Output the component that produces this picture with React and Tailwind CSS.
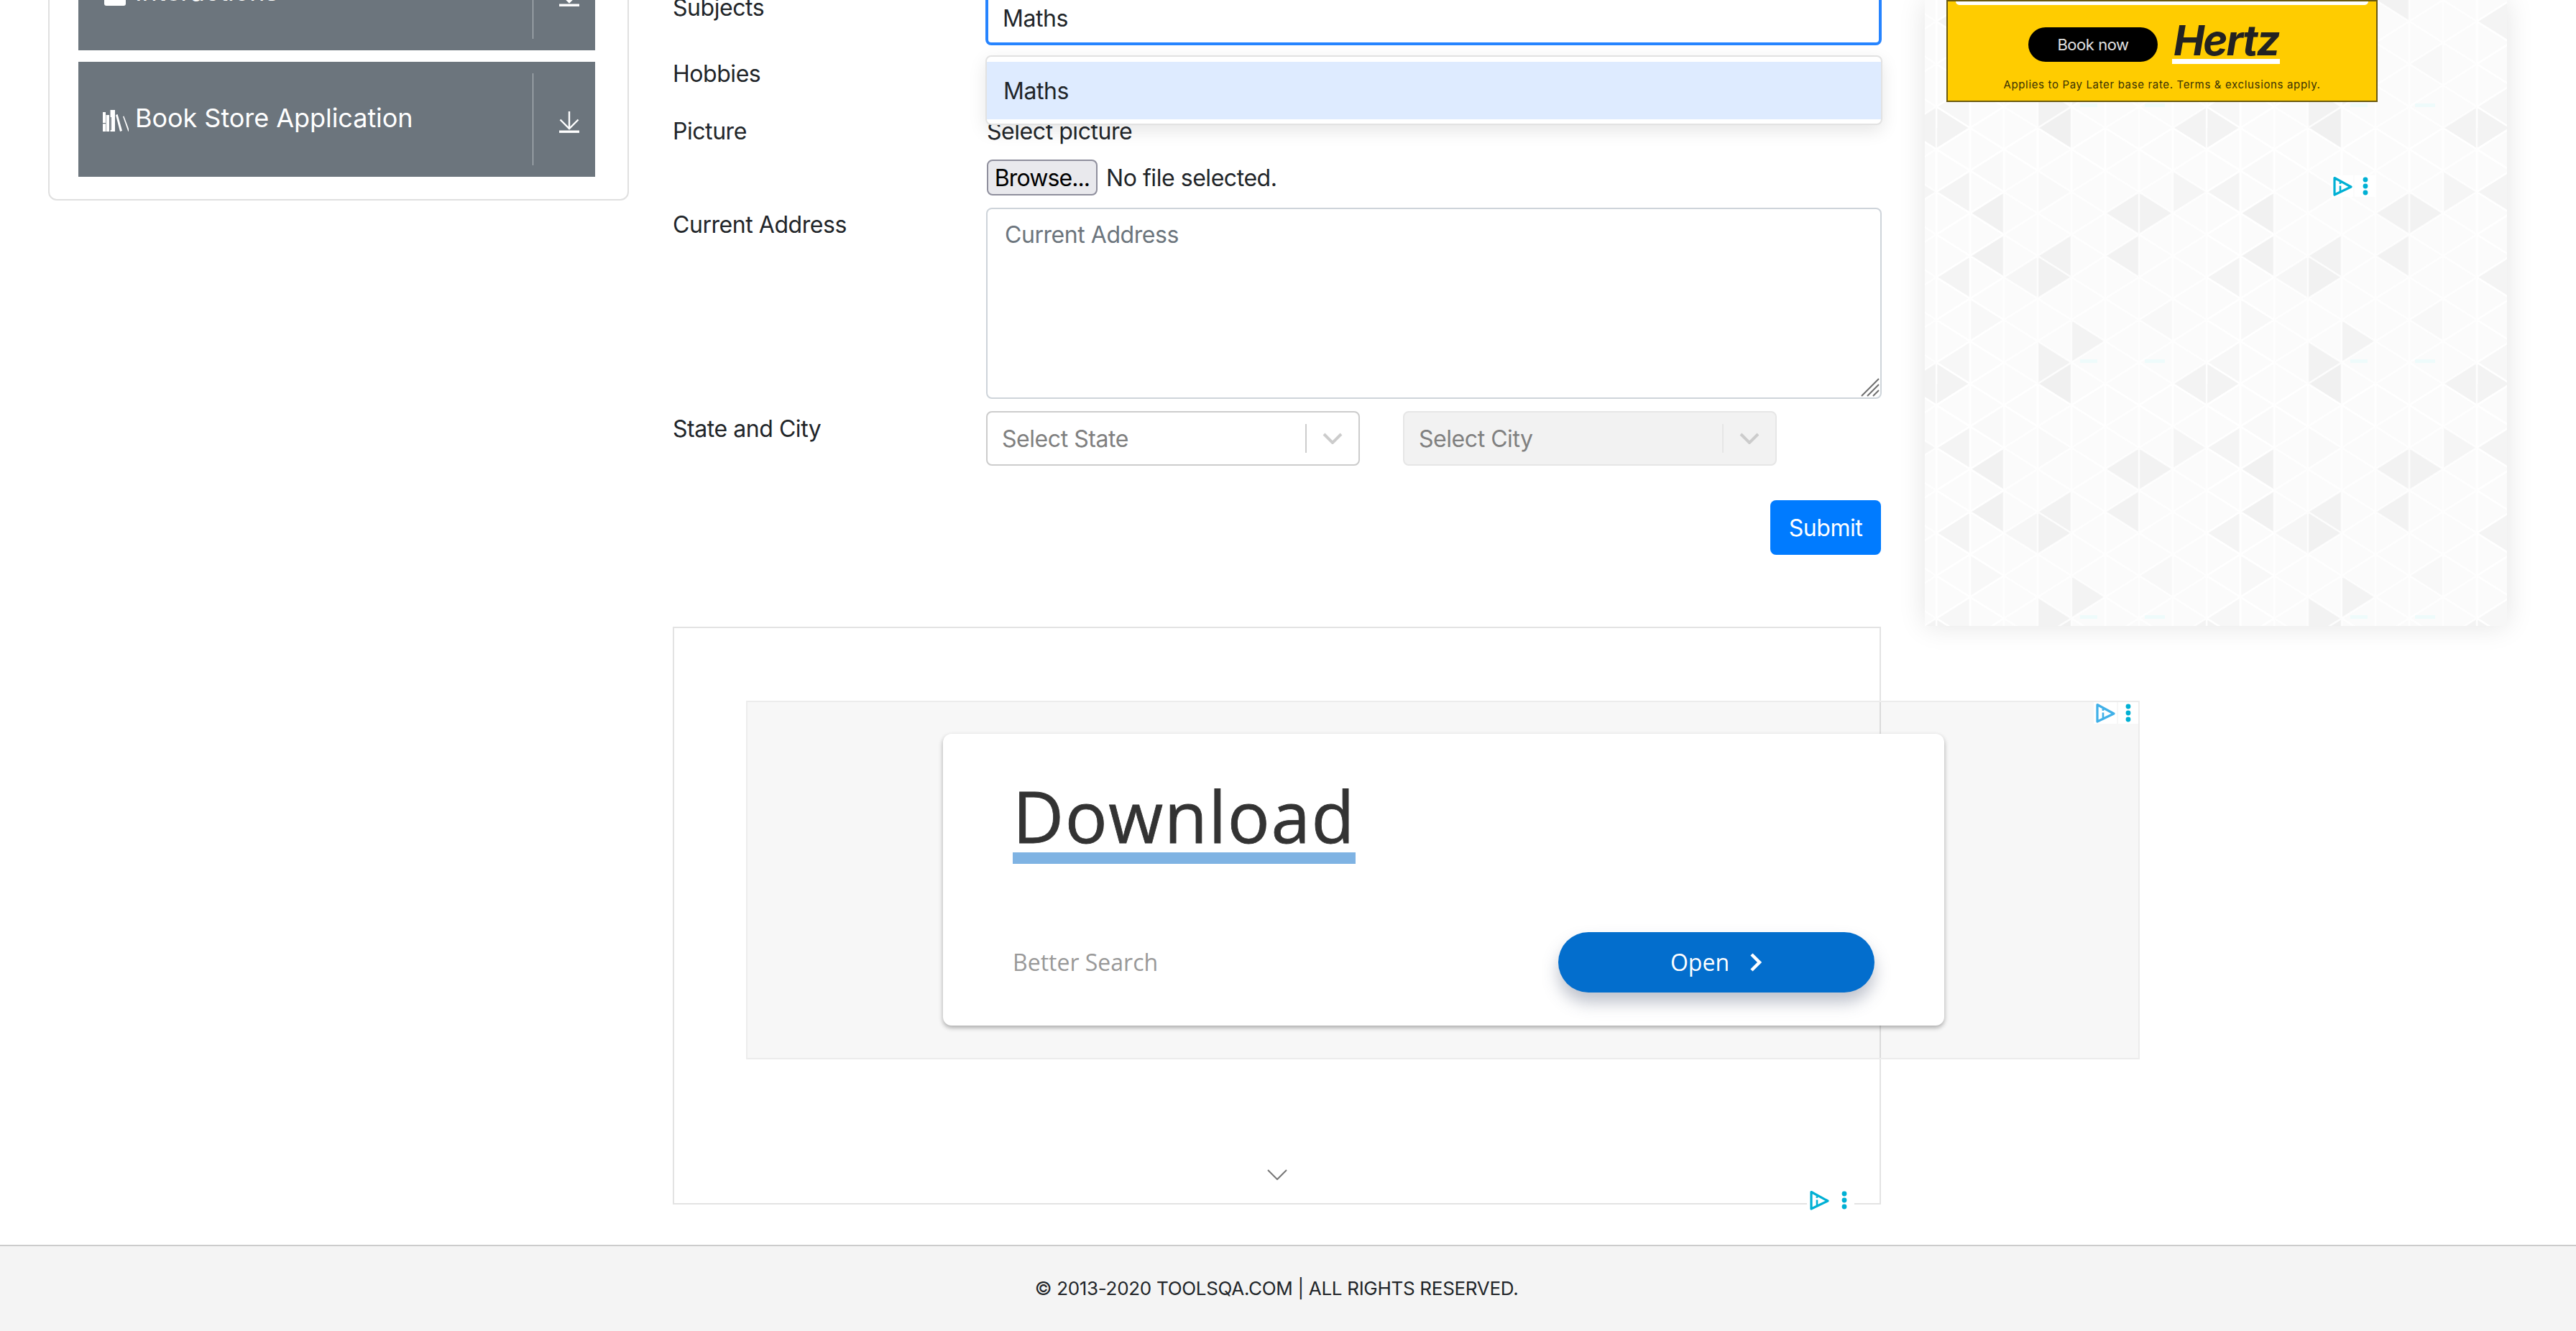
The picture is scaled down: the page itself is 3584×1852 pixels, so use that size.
const cols = Array.from({ length: 10 }, (_, i) => i);
const rows = Array.from({ length: 14 }, (_, j) => j);
const STEP_X = 47;
const STEP_Y = 29.67;
const PX = (i) => i * STEP_X;
const PY = (j) => j * STEP_Y;
// apex column, row, direction, shade
const DARK = [
  [3, 0, 'L', '#f0f0f0'], [7, 0, 'L', '#f3f3f3'], [1, 0, 'R', '#f3f3f3'],
  [0, 3, 'L', '#f4f4f4'], [0, 3, 'R', '#f5f5f5'],
  [1, 4, 'L', '#f1f1f1'], [5, 4, 'L', '#f2f2f2'], [7, 4, 'R', '#f2f2f2'],
  [1, 6, 'L', '#f1f1f1'], [3, 6, 'L', '#f2f2f2'], [5, 6, 'L', '#f2f2f2'],
  [0, 7, 'L', '#f4f4f4'], [2, 7, 'L', '#f6f6f6'], [4, 7, 'R', '#f1f1f1'],
  [5, 10, 'R', '#f3f3f3'],
  [4, 11, 'R', '#f2f2f2'], [0, 11, 'L', '#f7f7f7'],
  [1, 2, 'L', '#f9f9f9'], [4, 3, 'R', '#f9f9f9'], [6, 9, 'L', '#f8f8f8'], [2, 9, 'R', '#f8f8f8'],
];

function tri(i, j, d) {
  const ax = PX(i);
  const ay = PY(j);
  const vx = d === 'L' ? PX(i + 1) : PX(i - 1);
  return `${ax},${ay} ${vx},${ay - STEP_Y} ${vx},${ay + STEP_Y}`;
}

function Pattern() {
  const lines = [];
  cols.forEach((i) => {
    rows.forEach((j) => {
      if ((i + j) % 2 === 1) {
        lines.push(`M${PX(i)} ${PY(j)}L${PX(i + 1)} ${PY(j + 1)}M${PX(i)} ${PY(j)}L${PX(i + 1)} ${PY(j - 1)}M${PX(i)} ${PY(j)}L${PX(i)} ${PY(j + 2)}`);
      }
    });
  });
  return (
    <div className="absolute inset-0 overflow-hidden">
      <svg className="absolute -inset-[4px] w-[818px] h-[879px] blur-[0.7px]" aria-hidden="true">
        <defs>
          <pattern id="tri-tile" x="20" y="182" width="376" height="356" patternUnits="userSpaceOnUse">
            <rect width="376" height="356" fill="#fbfbfb" />
            {[-8, 0, 8].flatMap((ox) =>
              [-12, 0, 12].flatMap((oy) =>
                DARK.map(([i, j, d, c], k) => (
                  <polygon key={`${ox}-${oy}-${k}`} points={tri(i + ox, j + oy, d)} fill={c} />
                ))
              )
            )}
            <path d={lines.join('')} stroke="#ffffff" strokeOpacity="0.8" strokeWidth="2.5" fill="none" />
            <path d={lines.join('')} transform="translate(-376 0)" stroke="#ffffff" strokeOpacity="0.8" strokeWidth="2.5" fill="none" />
            <path d={lines.join('')} transform="translate(0 -356)" stroke="#ffffff" strokeOpacity="0.8" strokeWidth="2.5" fill="none" />
            <rect x="200" y="322" width="24" height="5" fill="#e6fbfb" opacity="0.6" />
            <rect x="290" y="322" width="28" height="5" fill="#e6fbfb" opacity="0.6" />
          </pattern>
        </defs>
        <rect width="100%" height="100%" fill="url(#tri-tile)" />
      </svg>
    </div>
  );
}

function AdTriangle({ color = '#00b0d4' }) {
  return (
    <svg width="28" height="28" viewBox="0 0 28 28" fill="none">
      <path d="M3 2.5 L26 15 L3 26 Z" stroke={color} strokeWidth="3.2" strokeLinejoin="round" />
      <path d="M11 13.5 V21" stroke={color} strokeWidth="2.6" />
      <circle cx="11" cy="9.5" r="1.6" fill={color} />
    </svg>
  );
}

function AdDots({ color = '#00b0d4' }) {
  return (
    <svg width="8" height="26" viewBox="0 0 8 26" fill={color}>
      <circle cx="4" cy="4" r="3.4" />
      <circle cx="4" cy="13" r="3.4" />
      <circle cx="4" cy="22" r="3.4" />
    </svg>
  );
}

function DownloadIcon() {
  return (
    <svg width="30" height="30" viewBox="0 0 30 30" fill="none" stroke="#ffffff" strokeWidth="2.4">
      <path d="M15 0 V23" />
      <path d="M2.5 11.5 L15 24 L27.5 11.5" />
      <path d="M1 28.2 H29" strokeWidth="3.4" />
    </svg>
  );
}

function BooksIcon() {
  return (
    <svg width="36" height="32" viewBox="0 0 36 32" fill="#ffffff" className="shrink-0">
      <rect x="0" y="3" width="4" height="27" />
      <rect x="4.6" y="7" width="4.4" height="23" />
      <rect x="10.5" y="0" width="6.5" height="30" />
      <rect x="0" y="18" width="4" height="1.2" fill="#6c757d" />
      <rect x="10.5" y="10" width="1.4" height="18" fill="#6c757d" />
      <path d="M18 7 L20.6 6 L27 29 L24 30 Z" />
      <path d="M28 9 L29.4 8.4 L37 29 L35.4 30 Z" />
    </svg>
  );
}

function SidebarButton({ icon, label }) {
  return (
    <div className="h-[160px] bg-[#6c757d] flex items-center text-white pl-[34px] pr-[21px]">
      <div className="w-[45px] shrink-0 flex items-center pt-[6px]">{icon}</div>
      <span className="flex-1 text-[36px] leading-[50px] -mt-[4px] tracking-[-0.05px]">{label}</span>
      <div className="w-[1px] h-[128px] bg-[#b5bbc0] mr-[35px]" />
      <div className="pt-[8px]">
        <DownloadIcon />
      </div>
    </div>
  );
}

function SelectBox({ label, disabled }) {
  const chevron = '#cccccc';
  return (
    <div
      className={`w-[520px] h-[76px] rounded-lg border-2 flex items-center ${
        disabled ? 'bg-[#f2f2f2] border-[#e6e6e6]' : 'bg-white border-[#cccccc]'
      }`}
    >
      <span className="flex-1 pl-[20px] pt-[2px] text-[#808080]">{label}</span>
      <div className={`w-[2px] h-[40px] ${disabled ? 'bg-[#e6e6e6]' : 'bg-[#cccccc]'}`} />
      <div className="w-[72px] flex justify-center">
        <svg width="28" height="16" viewBox="0 0 28 16" fill="none" stroke={chevron} strokeWidth="4">
          <path d="M2 2 L14 14 L26 2" />
        </svg>
      </div>
    </div>
  );
}

export default function App() {
  return (
    <div className="w-[3584px] h-[1852px] overflow-hidden flex flex-col bg-white text-[#212529] text-[32px] leading-[38px] tracking-[-0.45px] font-['Inter',sans-serif]">
      <div className="h-[1732px] flex items-start shrink-0">
        {/* Left menu */}
        <div className="ml-[67px] w-[808px] shrink-0 -mt-[120px] h-[399px] border-2 border-[#e0e0e0] rounded-xl pt-[28px] pl-[40px] pr-[45px] flex flex-col gap-[16px] bg-white">
          <SidebarButton
            label="Interactions"
            icon={<div className="w-[30px] h-[30px] bg-white rounded-[3px] ml-[2px]" />}
          />
          <SidebarButton label="Book Store Application" icon={<BooksIcon />} />
        </div>

        {/* Form */}
        <div className="ml-[61px] w-[1681px] shrink-0 flex flex-col relative">
          <div className="flex h-[63px]">
            <div className="w-[435px] shrink-0 -mt-[8px]">Subjects</div>
            <div className="flex-1 h-[76px] -mt-[13px] -mr-[1px] border-4 border-[#2684ff] rounded-lg flex items-center pl-[20px] pt-[2px] bg-white">
              Maths
            </div>
          </div>
          <div className="absolute z-10 left-[435px] top-[77px] w-[1248px] h-[97px] bg-white border-2 border-[#e2e2e2] rounded-lg py-[7px] shadow-[0_8px_24px_rgba(0,0,0,0.10)]">
            <div className="h-[80px] bg-[#deebff] flex items-center pl-[23px] pt-[2px]">Maths</div>
          </div>

          <div className="mt-[21px] h-[38px]">Hobbies</div>

          <div className="mt-[42px] flex">
            <div className="w-[435px] shrink-0">Picture</div>
            <div className="flex-1 pl-[2px]">
              <div>Select picture</div>
              <div className="mt-[20px] h-[50px] flex items-center">
                <div className="w-[154px] h-[50px] pt-[2px] rounded-lg border-2 border-[#8f8f9d] bg-[#e9e9ed] flex items-center justify-center text-black tracking-[-0.9px]">
                  Browse...
                </div>
                <span className="ml-[12px] pt-[2px]">No file selected.</span>
              </div>
            </div>
          </div>

          <div className="mt-[17px] h-[266px] flex">
            <div className="w-[435px] shrink-0 pt-[5px]">Current Address</div>
            <div className="flex-1 relative ml-[1px] -mr-[1px]">
              <textarea
                readOnly
                placeholder="Current Address"
                className="w-full h-full block border-2 border-[#ced4da] rounded-lg resize-none pl-[24px] pt-[17px] placeholder:text-[#6c757d] outline-none font-['Inter',sans-serif] tracking-[-0.45px] text-[32px] leading-[38px]"
              />
              <svg width="26" height="26" viewBox="0 0 26 26" className="absolute right-[3px] bottom-[3px]" stroke="#6f6f6f" strokeWidth="2" fill="none">
                <path d="M1 25 L25 1 M9 25 L25 9 M17 25 L25 17" />
              </svg>
            </div>
          </div>

          <div className="mt-[17px] h-[76px] flex">
            <div className="w-[435px] shrink-0 pt-[6px]">State and City</div>
            <div className="flex gap-[60px] ml-[1px]">
              <SelectBox label="Select State" />
              <SelectBox label="Select City" disabled />
            </div>
          </div>

          <button className="mt-[48px] self-end w-[154px] h-[76px] pt-[2px] rounded-lg bg-[#007bff] text-white">Submit</button>

          {/* Bottom ad frame */}
          <div className="mt-[100px] h-[804px] border-2 border-[#e3e3e3] relative pl-[100px] pt-[101px]">
            <div className="w-[1939px] h-[499px] border-2 border-[#ececec] bg-black/[0.03] relative pl-[272px] pt-[44px] tracking-normal">
              <div className="absolute right-0 top-0 h-[30px] flex gap-[2px]">
                <div className="w-[32px] h-[30px] bg-white flex items-center justify-center">
                  <AdTriangle color="#40b0e8" />
                </div>
                <div className="w-[28px] h-[30px] bg-white flex items-center justify-center">
                  <AdDots />
                </div>
              </div>
              <div className="w-[1393px] h-[406px] bg-white rounded-xl shadow-[0_3px_6px_rgba(0,0,0,0.32)] pl-[97px] pt-[63px] pr-[97px] flex flex-col font-['Open_Sans',sans-serif] relative">
                <div className="w-[477px] text-[98px] leading-[102px] font-medium text-[#333333] tracking-[1.6px] whitespace-nowrap [-webkit-text-stroke:0.8px_#333333]">
                  Download
                </div>
                <div className="w-[477px] h-[16px] bg-[#7fb3e3]" />
                <div className="mt-[95px] flex items-center justify-between">
                  <span className="text-[32px] text-[#999999]">Better Search</span>
                  <div className="w-[440px] h-[84px] rounded-[42px] bg-[#036ecd] text-white flex items-center justify-center gap-[28px] shadow-[0_14px_22px_rgba(70,80,110,0.35)]">
                    <span>Open</span>
                    <svg width="18" height="26" viewBox="0 0 18 26" fill="none" stroke="#ffffff" strokeWidth="4.5">
                      <path d="M3 2 L14 13 L3 24" />
                    </svg>
                  </div>
                </div>
              </div>
            </div>
            <svg width="28" height="15" viewBox="0 0 28 15" fill="none" stroke="#777777" strokeWidth="2" className="absolute left-[825px] top-[753px]">
              <path d="M1 1 L14 14 L27 1" />
            </svg>
            <div className="absolute left-[1576px] top-[780px] h-[32px] flex items-center bg-white pl-[3px] pr-[10px] gap-[17px]">
              <AdTriangle />
              <AdDots />
            </div>
          </div>
        </div>

        {/* Right ad */}
        <div className="ml-[61px] w-[810px] h-[871px] shrink-0 relative shadow-[0_0_36px_rgba(0,0,0,0.11)]">
          <Pattern />
          <div className="relative ml-[30px] w-[600px] h-[142px] bg-[#ffcc00] border-2 border-[#6b5a10] flex flex-col items-center overflow-hidden">
            <div className="w-[574px] h-[5px] bg-white rounded-b-lg shrink-0" />
            <div className="flex items-start mt-[30px] w-full pl-[112px] h-[60px] shrink-0">
              <div className="w-[180px] h-[48px] mt-[1px] rounded-[24px] bg-black text-[#e0e0e0] text-[22px] flex items-center justify-center shrink-0">
                Book now
              </div>
              <div className="ml-[22px] -mt-[10px] flex flex-col">
                <span className="font-bold italic text-[#222222] text-[58px] leading-[58px] tracking-[-2px]">Hertz</span>
                <div className="w-[150px] h-[7px] bg-white mt-[-3px] -ml-[2px]" />
              </div>
            </div>
            <div className="text-[15px] leading-[20px] mt-[11px] text-[#3a3205] tracking-[0.65px] whitespace-nowrap">
              Applies to Pay Later base rate. Terms &amp; exclusions apply.
            </div>
          </div>
          <div className="absolute left-[566px] top-[244px] flex gap-[2px]">
            <div className="w-[30px] h-[30px] bg-white flex items-center justify-center">
              <AdTriangle />
            </div>
            <div className="w-[30px] h-[30px] bg-white flex items-center justify-center">
              <AdDots />
            </div>
          </div>
        </div>
      </div>

      {/* Footer */}
      <footer className="flex-1 border-t-2 border-[#cccccc] bg-[#f4f4f4] flex items-center justify-center text-[26px] pr-[32px]">
        <span className="tracking-[-0.3px]">© 2013-2020 TOOLSQA.COM | ALL RIGHTS RESERVED.</span>
      </footer>
    </div>
  );
}
